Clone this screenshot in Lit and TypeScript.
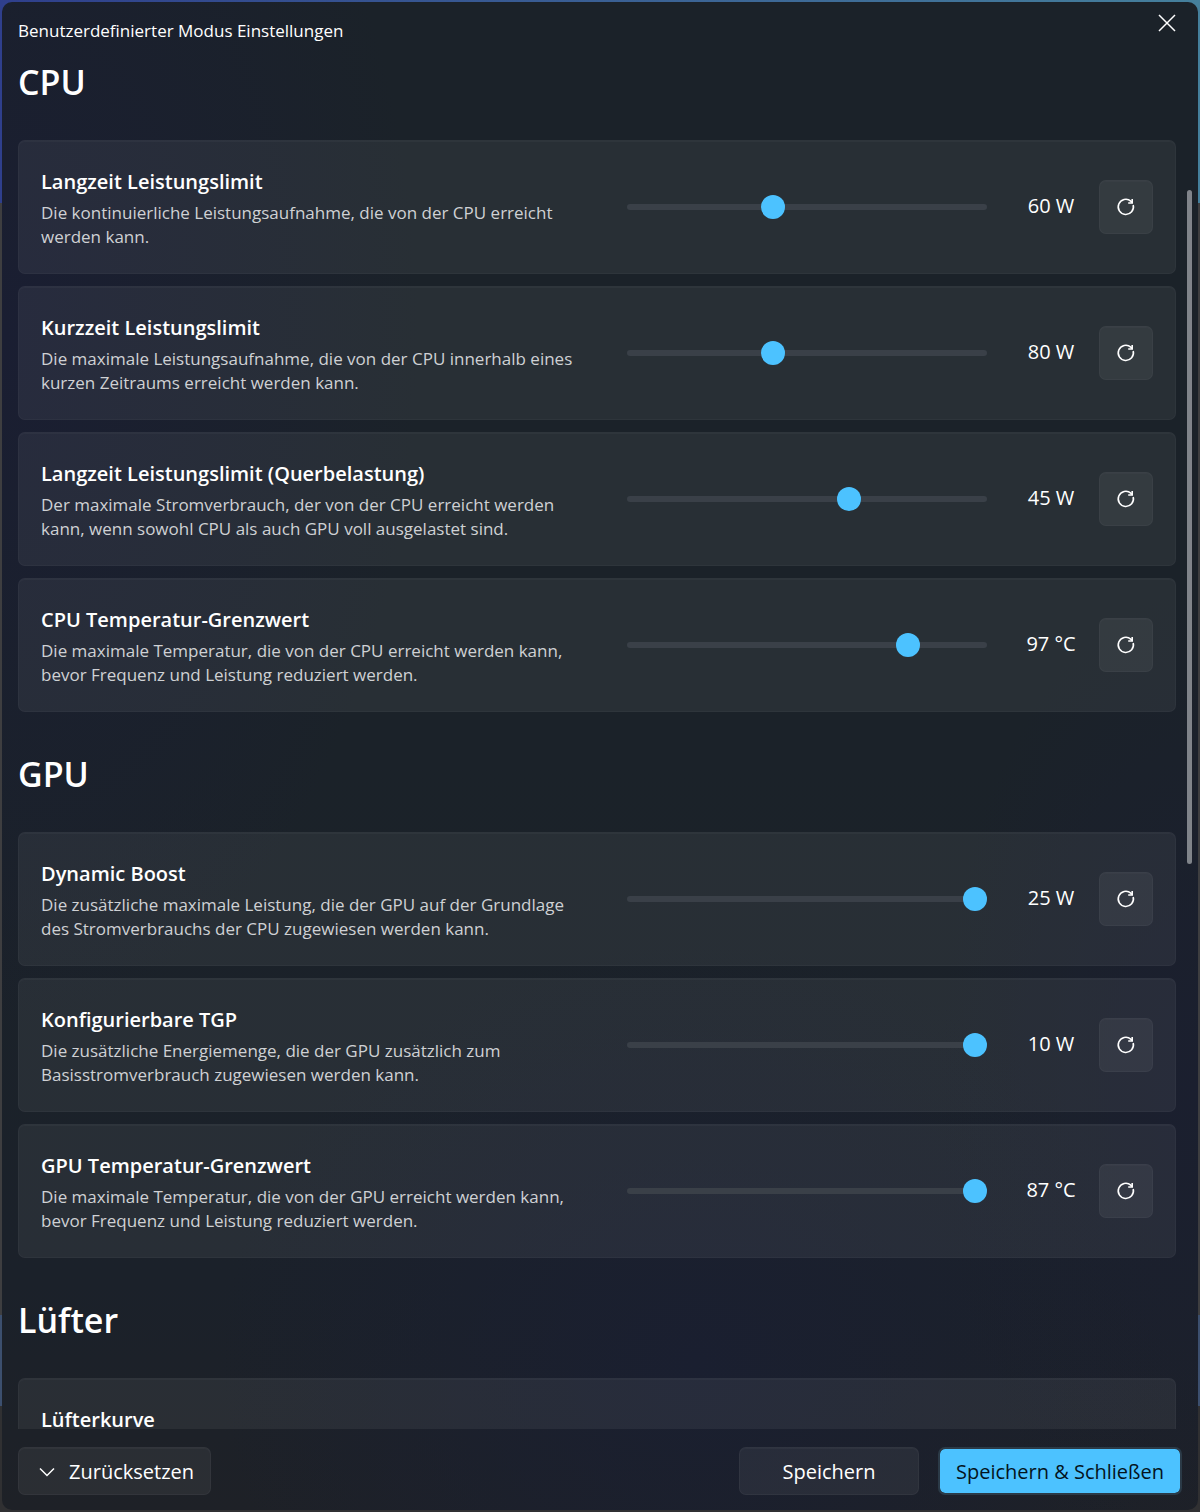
import { LitElement, html, css } from "lit";
import { customElement, property, state } from "lit/decorators.js";

interface Setting {
  id: string;
  title: string;
  text: string;
  min: number;
  max: number;
  value: number;
  unit: string;
}

interface Section {
  title: string;
  settings: Setting[];
}

const SECTIONS: Section[] = [
  {
    title: "CPU",
    settings: [
      { id: "cpu-long", title: "Langzeit Leistungslimit", text: "Die kontinuierliche Leistungsaufnahme, die von der CPU erreicht werden kann.", min: 20, max: 120, value: 60, unit: "W" },
      { id: "cpu-short", title: "Kurzzeit Leistungslimit", text: "Die maximale Leistungsaufnahme, die von der CPU innerhalb eines kurzen Zeitraums erreicht werden kann.", min: 40, max: 140, value: 80, unit: "W" },
      { id: "cpu-cross", title: "Langzeit Leistungslimit (Querbelastung)", text: "Der maximale Stromverbrauch, der von der CPU erreicht werden kann, wenn sowohl CPU als auch GPU voll ausgelastet sind.", min: 20, max: 60, value: 45, unit: "W" },
      { id: "cpu-temp", title: "CPU Temperatur-Grenzwert", text: "Die maximale Temperatur, die von der CPU erreicht werden kann, bevor Frequenz und Leistung reduziert werden.", min: 85, max: 100, value: 97, unit: "°C" },
    ],
  },
  {
    title: "GPU",
    settings: [
      { id: "gpu-boost", title: "Dynamic Boost", text: "Die zusätzliche maximale Leistung, die der GPU auf der Grundlage des Stromverbrauchs der CPU zugewiesen werden kann.", min: 0, max: 25, value: 25, unit: "W" },
      { id: "gpu-tgp", title: "Konfigurierbare TGP", text: "Die zusätzliche Energiemenge, die der GPU zusätzlich zum Basisstromverbrauch zugewiesen werden kann.", min: 0, max: 10, value: 10, unit: "W" },
      { id: "gpu-temp", title: "GPU Temperatur-Grenzwert", text: "Die maximale Temperatur, die von der GPU erreicht werden kann, bevor Frequenz und Leistung reduziert werden.", min: 75, max: 87, value: 87, unit: "°C" },
    ],
  },
];

@customElement("setting-card")
export class SettingCard extends LitElement {
  @property({ attribute: false }) setting!: Setting;
  @state() private current?: number;

  static styles = css`
    :host {
      display: block;
    }
    .card {
      display: grid;
      grid-template-columns: minmax(0, 1fr) 360px 80px 54px;
      column-gap: 16px;
      align-items: center;
      box-sizing: border-box;
      min-height: 134px;
      padding: 0 22px;
      border: 1px solid rgba(255, 255, 255, 0.03);
      border-radius: 7px;
      background: rgba(255, 255, 255, 0.06);
      box-shadow: inset 0 1px 0 rgba(255, 255, 255, 0.03);
    }
    .text {
      padding: 3px 28px 0 0;
    }
    .title {
      display: block;
      margin-bottom: 5px;
      color: #fff;
      font-size: 20px;
      line-height: 28px;
      font-weight: 600;
    }
    .desc {
      margin: 0;
      color: #cfd1d4;
      font-size: 17px;
      line-height: 24px;
    }
    .slider {
      appearance: none;
      width: 100%;
      height: 24px;
      margin: 0;
      background: transparent;
    }
    .slider::-webkit-slider-runnable-track {
      height: 6px;
      border-radius: 3px;
      background: #3a4048;
    }
    .slider::-webkit-slider-thumb {
      appearance: none;
      width: 24px;
      height: 24px;
      margin-top: -9px;
      border-radius: 50%;
      background: #4cc2ff;
    }
    .value {
      padding: 0 0 2px 16px;
      color: #fff;
      font-size: 20px;
      line-height: 28px;
      text-align: center;
      white-space: nowrap;
    }
    .reset {
      display: grid;
      place-items: center;
      width: 54px;
      height: 54px;
      padding: 0;
      border: 1px solid rgba(255, 255, 255, 0.03);
      border-radius: 7px;
      background: rgba(255, 255, 255, 0.06);
      box-shadow: inset 0 1px 0 rgba(255, 255, 255, 0.02);
      color: #fff;
    }
  `;

  render() {
    const s = this.setting;
    const value = this.current ?? s.value;
    return html`
      <div class="card">
        <div class="text">
          <label class="title" for=${s.id}>${s.title}</label>
          <p class="desc" id="desc">${s.text}</p>
        </div>
        <input
          class="slider"
          type="range"
          id=${s.id}
          aria-describedby="desc"
          min=${s.min}
          max=${s.max}
          .value=${String(value)}
          @input=${(e: Event) => (this.current = Number((e.target as HTMLInputElement).value))}
        />
        <output class="value" for=${s.id}>${value} ${s.unit}</output>
        <button class="reset" type="button" aria-label="Zurücksetzen" @click=${() => (this.current = s.value)}>
          <svg width="20" height="20" viewBox="0 0 20 20" fill="none" stroke="currentColor" stroke-width="1.6" aria-hidden="true">
            <path d="M17.2 8A7.6 7.6 0 1 1 14.8 4.1L16 5.4" />
            <path d="M16.2 2v4h-4" />
          </svg>
        </button>
      </div>
    `;
  }
}

@customElement("app-root")
export class AppRoot extends LitElement {
  static styles = css`
    :host {
      display: block;
      box-sizing: border-box;
      height: 100vh;
      padding: 2px;
      font-family: "Segoe UI", "Open Sans", "Noto Sans", sans-serif;
      color: #fff;
      background:
        linear-gradient(90deg, #2f3f8c, #45809c) 0 0 / 100% 203px no-repeat,
        linear-gradient(#3e3e40 0 87%, #3c4f6e 87% 93%, #303032 93%);
    }
    .window {
      display: grid;
      grid-template-rows: 56px minmax(0, 1fr) auto;
      height: 100%;
      overflow: hidden;
      border-radius: 10px;
      background:
        radial-gradient(ellipse 420px 700px at 0 22%, #1a1e32, rgba(26, 30, 50, 0)),
        radial-gradient(ellipse 480px 420px at 58% 90%, #1a1f30, rgba(26, 31, 48, 0)),
        radial-gradient(ellipse 260px 500px at 100% 72%, #1b1f2f, rgba(27, 31, 47, 0)),
        linear-gradient(#1b2229 0 50%, #1b212a 85%, #1e2127);
    }
    .bar {
      display: flex;
      justify-content: space-between;
      align-items: flex-start;
      padding: 0 15px 0 16px;
    }
    .caption {
      margin: 0;
      padding-top: 17px;
      font-size: 17px;
      line-height: 24px;
      font-weight: 400;
    }
    .close {
      display: grid;
      place-items: center;
      width: 32px;
      height: 42px;
      padding: 0;
      border: 0;
      background: none;
      color: #fff;
    }
    .viewport {
      position: relative;
      min-height: 0;
    }
    .scroll {
      height: 100%;
      overflow-y: auto;
      scrollbar-width: none;
      padding: 0 22px 0 16px;
      box-sizing: border-box;
    }
    .thumb {
      position: absolute;
      top: 132px;
      right: 6px;
      width: 5px;
      height: 674px;
      border-radius: 3px;
      background: #80848a;
    }
    .section + .section {
      margin-top: 38px;
    }
    .heading {
      margin: 0 0 34px;
      font-size: 34px;
      line-height: 48px;
      font-weight: 600;
    }
    .cards {
      display: grid;
      gap: 12px;
    }
    .partial {
      box-sizing: border-box;
      height: 134px;
      padding: 27px 22px 0;
      border: 1px solid rgba(255, 255, 255, 0.03);
      border-radius: 7px;
      background: rgba(255, 255, 255, 0.06);
      box-shadow: inset 0 1px 0 rgba(255, 255, 255, 0.03);
      font-size: 20px;
      line-height: 28px;
      font-weight: 600;
    }
    .footer {
      display: flex;
      gap: 19px;
      padding: 18px 16px 15px;
    }
    .button {
      display: flex;
      align-items: center;
      justify-content: center;
      box-sizing: border-box;
      min-width: 180px;
      height: 48px;
      padding: 2px 16px 0;
      border: 1px solid rgba(255, 255, 255, 0.04);
      border-radius: 7px;
      background: rgba(255, 255, 255, 0.06);
      box-shadow: inset 0 1px 0 rgba(255, 255, 255, 0.03);
      color: #fff;
      font: inherit;
      font-size: 20px;
      line-height: 28px;
      white-space: nowrap;
    }
    .menu {
      justify-content: flex-start;
      gap: 14px;
      min-width: 193px;
      padding-left: 20px;
      margin-right: auto;
    }
    .primary {
      min-width: 243px;
      border: 2px solid #2b3a47;
      background: #4cc2ff;
      background-clip: padding-box;
      box-shadow: none;
      color: #04141d;
    }
  `;

  render() {
    return html`
      <main class="window">
        <header class="bar">
          <h1 class="caption">Benutzerdefinierter Modus Einstellungen</h1>
          <button class="close" type="button" aria-label="Schließen">
            <svg width="18" height="18" viewBox="0 0 18 18" fill="none" stroke="currentColor" stroke-width="1.5" aria-hidden="true">
              <path d="M1 1l16 16M17 1L1 17" />
            </svg>
          </button>
        </header>
        <div class="viewport">
          <div class="scroll">
            ${SECTIONS.map(
              (section) => html`
                <section class="section">
                  <h2 class="heading">${section.title}</h2>
                  <div class="cards">
                    ${section.settings.map((s) => html`<setting-card .setting=${s}></setting-card>`)}
                  </div>
                </section>
              `
            )}
            <section class="section">
              <h2 class="heading">Lüfter</h2>
              <div class="partial">Lüfterkurve</div>
            </section>
          </div>
          <div class="thumb"></div>
        </div>
        <footer class="footer">
          <button class="button menu" type="button">
            <svg width="16" height="10" viewBox="0 0 16 10" fill="none" stroke="currentColor" stroke-width="1.5" aria-hidden="true">
              <path d="M1 1.5l7 7 7-7" />
            </svg>
            Zurücksetzen
          </button>
          <button class="button" type="button">Speichern</button>
          <button class="button primary" type="button">Speichern &amp; Schließen</button>
        </footer>
      </main>
    `;
  }
}
